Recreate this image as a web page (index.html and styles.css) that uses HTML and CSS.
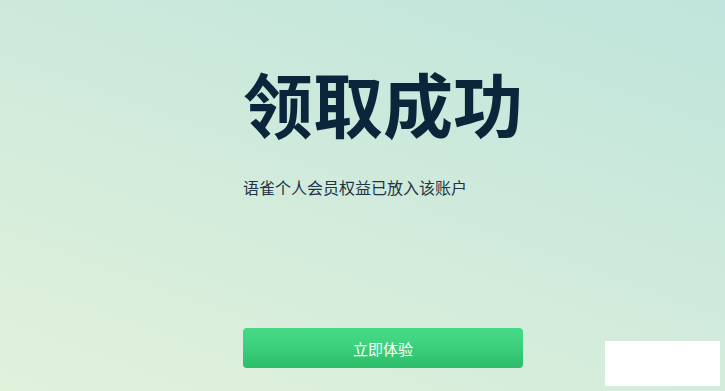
FILE: index.html
```html
<!DOCTYPE html>
<html lang="zh-CN">
<head>
  <meta charset="UTF-8">
  <meta name="viewport" content="width=device-width, initial-scale=1.0">
  <title>领取成功</title>
  <link rel="stylesheet" href="styles.css">
</head>
<body>

<div class="page">
  <div class="result">
    <h1 class="result-title">领取成功</h1>
    <p class="result-desc">语雀个人会员权益已放入该账户</p>
    <button class="primary-button">立即体验</button>
  </div>
  <div class="corner-box"></div>
</div>

</body>
</html>
```

FILE: styles.css
```css
html, body {
    margin: 0;
    padding: 0;
    height: 100%;
}

body {
    font-family: 'Noto Sans CJK SC', 'Noto Sans', sans-serif;
    background: linear-gradient(20deg, #e1f2db 0%, #d2ebdb 45%, #bfe5dc 100%);
    overflow: hidden;
}

.page {
    position: relative;
    height: 100%;
}

.result {
    display: flex;
    flex-direction: column;
    align-items: flex-start;
    width: 280px;
    padding: 68px 0 0 243px;
}

.result-title {
    margin: 0;
    font-size: 70px;
    line-height: 70px;
    font-weight: 700;
    color: #0b263a;
    letter-spacing: 0;
}

.result-desc {
    margin: 37px 0 0;
    font-size: 16px;
    line-height: 24px;
    color: #1f3345;
}

.primary-button {
    width: 280px;
    height: 40px;
    margin-top: 129px;
    border: none;
    border-radius: 4px;
    background: linear-gradient(180deg, #46da87 0%, #3fd27e 40%, #2bbd68 100%);
    color: #ffffff;
    font-family: inherit;
    font-size: 15px;
    cursor: pointer;
}

.corner-box {
    position: absolute;
    left: 605px;
    top: 341px;
    width: 115px;
    height: 45px;
    background-color: #ffffff;
}
```
